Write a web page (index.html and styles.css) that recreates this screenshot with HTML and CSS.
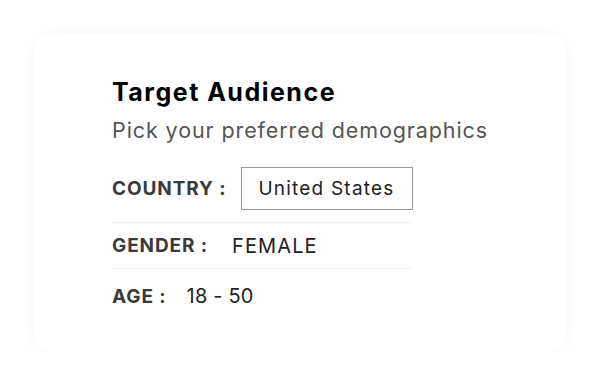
FILE: index.html
```html
<!DOCTYPE html>
<html>
<head>
<meta charset="utf-8">
<link rel="stylesheet" href="styles.css">
</head>
<body>
<div class="card">
  <h1 class="title">Target Audience</h1>
  <p class="subtitle">Pick your preferred demographics</p>
  <div class="rows">
    <div class="row row-country">
      <span class="label">COUNTRY :</span>
      <span class="box">United States</span>
    </div>
    <div class="divider"></div>
    <div class="row row-gender">
      <span class="label">GENDER :</span>
      <span class="value">FEMALE</span>
    </div>
    <div class="divider"></div>
    <div class="row row-age">
      <span class="label">AGE :</span>
      <span class="value value-age">18 - 50</span>
    </div>
  </div>
</div>
</body>
</html>
```
FILE: styles.css
```css
html, body {
  margin: 0;
  padding: 0;
  background: #ffffff;
}
body {
  padding: 33px 0 0 33px;
  font-family: Inter, "Noto Sans", sans-serif;
}
.card {
  box-sizing: border-box;
  width: 534px;
  height: 320px;
  border-radius: 24px;
  background: #ffffff;
  box-shadow: 0 0 18px rgba(0, 0, 0, 0.045);
  padding: 44px 0 0 79px;
}
.title {
  margin: 0;
  font-size: 25px;
  line-height: 30px;
  font-weight: 700;
  color: #000;
  letter-spacing: 1.5px;
  white-space: nowrap;
}
.subtitle {
  margin: 10px 0 0 0;
  font-size: 21.5px;
  line-height: 26px;
  font-weight: 400;
  color: #555;
  letter-spacing: 0.9px;
  white-space: nowrap;
}
.rows {
  margin-top: 24px;
  width: 300px;
}
.row {
  display: flex;
  align-items: center;
  white-space: nowrap;
}
.row > span {
  flex-shrink: 0;
}
.row-country {
  height: 43px;
}
.row-gender {
  height: 45px;
}
.row-age {
  height: 54px;
}
.label {
  font-size: 19px;
  font-weight: 700;
  color: #3a3a3a;
  letter-spacing: 0.9px;
}
.value {
  font-size: 20px;
  color: #222;
  margin-left: 24px;
  letter-spacing: 1.1px;
}
.value-age {
  margin-left: 20px;
  letter-spacing: 0.2px;
}
.box {
  box-sizing: border-box;
  height: 43px;
  margin-left: 14px;
  padding: 0 17px;
  border: 1.5px solid #999;
  display: flex;
  align-items: center;
  font-size: 19px;
  color: #222;
  letter-spacing: 1.2px;
}
.row-country + .divider {
  margin-top: 12px;
}
.divider {
  height: 1px;
  background: #f1f1f1;
}
```
